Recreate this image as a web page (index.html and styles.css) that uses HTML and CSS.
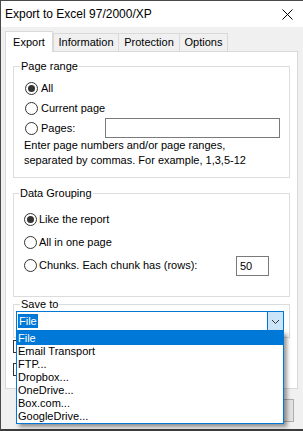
FILE: index.html
```html
<!DOCTYPE html>
<html>
<head>
<meta charset="utf-8">
<link rel="stylesheet" href="styles.css">
</head>
<body>
<div class="window">
  <div class="titlebar">
    <span class="title">Export to Excel 97/2000/XP</span>
    <svg class="close" width="11" height="11" viewBox="0 0 11 11"><path d="M0.5 0.5 L10.5 10.5 M10.5 0.5 L0.5 10.5" stroke="#000" stroke-width="1" fill="none"/></svg>
  </div>
  <div class="client">
    <div class="tabs">
      <div class="tab active t-export">Export</div>
      <div class="tab t-info">Information</div>
      <div class="tab t-prot">Protection</div>
      <div class="tab t-opt">Options</div>
    </div>
    <div class="panel">
      <fieldset class="group g-range">
        <legend>Page range</legend>
        <div class="body">
          <div class="radio-row"><span class="radio checked"></span><span class="lbl">All</span></div>
          <div class="radio-row"><span class="radio"></span><span class="lbl">Current page</span></div>
          <div class="radio-row"><span class="radio"></span><span class="lbl">Pages:</span><span class="textbox pages"></span></div>
          <p class="hint">Enter page numbers and/or page ranges,<br>separated by commas. For example, 1,3,5-12</p>
        </div>
      </fieldset>
      <fieldset class="group g-data">
        <legend>Data Grouping</legend>
        <div class="body">
          <div class="radio-row"><span class="radio checked"></span><span class="lbl">Like the report</span></div>
          <div class="radio-row"><span class="radio"></span><span class="lbl">All in one page</span></div>
          <div class="radio-row"><span class="radio"></span><span class="lbl">Chunks. Each chunk has (rows):</span><span class="textbox rows">50</span></div>
        </div>
      </fieldset>
      <fieldset class="group g-save">
        <legend>Save to</legend>
        <div class="body">
          <div class="combo">
            <span class="value"><span class="sel">File</span></span>
            <span class="drop-btn"><svg width="7" height="4" viewBox="0 0 7 4"><path d="M0 0 L3.5 3.5 L7 0" stroke="#333" stroke-width="1" fill="none"/></svg></span>
            <ul class="list">
              <li class="item selected">File</li>
              <li class="item">Email Transport</li>
              <li class="item">FTP...</li>
              <li class="item">Dropbox...</li>
              <li class="item">OneDrive...</li>
              <li class="item">Box.com...</li>
              <li class="item">GoogleDrive...</li>
            </ul>
          </div>
        </div>
      </fieldset>
      <div class="check-row first"><span class="checkbox"></span></div>
      <div class="check-row"><span class="checkbox"></span></div>
    </div>
    <div class="buttons">
      <span class="btn"></span>
      <span class="btn"></span>
    </div>
  </div>
</div>
</body>
</html>
```
FILE: styles.css
```css
html, body {
  margin: 0;
  padding: 0;
  width: 303px;
  height: 431px;
  overflow: hidden;
  background: #f0f0f0;
  font-family: "Liberation Sans", Arial, sans-serif;
  font-size: 11px;
  color: #000;
}

.window {
  box-sizing: border-box;
  height: 431px;
  border-top: 1px solid #4a4a4a;
  border-left: 1px solid #4a4a4a;
  border-bottom: 2px solid #3c3c3c;
  display: flex;
  flex-direction: column;
}

.titlebar {
  height: 26px;
  background: #fff;
  display: flex;
  align-items: center;
  justify-content: space-between;
  padding: 0 10px 0 4px;
}

.title {
  font-size: 12px;
}

.close {
  display: block;
}

.client {
  flex: 1;
  padding: 4px 0 0 4px;
  display: flex;
  flex-direction: column;
}

.tabs {
  display: flex;
  align-items: flex-end;
  height: 20px;
}

.tab {
  box-sizing: border-box;
  height: 18px;
  border: 1px solid #d9d9d9;
  border-bottom: none;
  background: #f0f0f0;
  display: flex;
  align-items: center;
  justify-content: center;
  line-height: 13px;
}

.tab.active {
  height: 21px;
  margin-bottom: -1px;
  background: #fff;
  position: relative;
  z-index: 1;
}

.t-export { width: 48px; }
.t-info { width: 66px; }
.t-prot { width: 62px; margin-left: -1px; }
.t-opt { width: 49px; margin-left: -1px; }

.panel {
  box-sizing: border-box;
  width: 293px;
  height: 338px;
  border: 1px solid #d9d9d9;
  background: #fff;
  padding: 8px 7px 0 7px;
}

.group {
  margin: 0;
  padding: 0;
  border: 1px solid #dcdcdc;
  min-width: 0;
}

.group legend {
  padding: 0 1px;
  margin-left: 6px;
  line-height: 13px;
  font-size: 11px;
}

.g-range .body {
  padding: 5px 9px 9px 11px;
}

.g-data {
  margin-top: 9px;
}

.g-data legend {
  margin-left: 5px;
}

.g-data .body {
  padding: 8px 20px 19px 10px;
}

.g-data .radio-row {
  height: 23px;
}

.g-data .radio-row .lbl {
  margin-left: 2px;
}

.g-save {
  margin-top: 1px;
}

.g-save .body {
  padding: 0 0 6px 2px;
}

.radio-row {
  display: flex;
  align-items: center;
  height: 20px;
}

.radio {
  box-sizing: border-box;
  width: 13px;
  height: 13px;
  border: 1px solid #333;
  border-radius: 50%;
  background: #fff;
  flex: none;
  display: flex;
  align-items: center;
  justify-content: center;
}

.radio.checked::after {
  content: "";
  width: 7px;
  height: 7px;
  border-radius: 50%;
  background: #333;
}

.lbl {
  margin-left: 3px;
  line-height: 13px;
}

.textbox {
  box-sizing: border-box;
  height: 20px;
  border: 1px solid #7a7a7a;
  background: #fff;
  margin-left: auto;
}

.textbox.pages {
  width: 175px;
}

.textbox.rows {
  width: 33px;
  padding-left: 3px;
  line-height: 18px;
}

.hint {
  margin: 0 0 0 -1px;
  line-height: 15px;
}

.combo {
  box-sizing: border-box;
  position: relative;
  width: 268px;
  height: 20px;
  border: 1px solid #0078d7;
  background: #fff;
  display: flex;
}

.combo .value {
  flex: 1;
  padding-left: 1px;
  padding-top: 2px;
}

.combo .sel {
  display: inline-block;
  background: #0078d7;
  color: #fff;
  line-height: 14px;
  padding: 0 1px;
}

.drop-btn {
  box-sizing: border-box;
  width: 16px;
  height: 18px;
  border-left: 1px solid #0078d7;
  background: #cce4f7;
  display: flex;
  align-items: center;
  justify-content: center;
}

.drop-btn svg {
  display: block;
  margin-top: 1px;
}

.list {
  position: absolute;
  left: -1px;
  top: 19px;
  box-sizing: border-box;
  width: 268px;
  margin: 0;
  padding: 0;
  list-style: none;
  border: 1px solid #0078d7;
  background: #fff;
  box-shadow: 3px 3px 4px rgba(0, 0, 0, 0.4);
  z-index: 10;
}

.item {
  height: 13px;
  line-height: 13px;
  padding-left: 1px;
}

.item.selected {
  background: #0078d7;
  color: #fff;
}

.check-row {
  display: flex;
  align-items: center;
  height: 13px;
  margin-top: 10px;
}

.check-row.first {
  margin-top: 2px;
}

.checkbox {
  box-sizing: border-box;
  width: 13px;
  height: 13px;
  border: 1px solid #333;
  background: #fff;
  flex: none;
}

.buttons {
  display: flex;
  justify-content: flex-end;
  gap: 6px;
  padding: 10px 9px 0 0;
}

.btn {
  box-sizing: border-box;
  width: 75px;
  height: 23px;
  background: #e1e1e1;
  border: 1px solid #adadad;
}
```
